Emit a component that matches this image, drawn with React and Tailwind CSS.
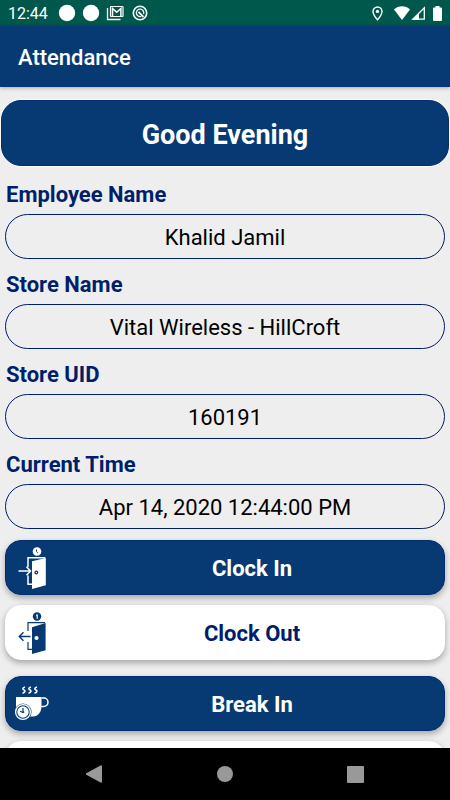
import { useState } from 'react';

const FIELDS = [
  { id: 'employee', label: 'Employee Name', value: 'Khalid Jamil' },
  { id: 'store', label: 'Store Name', value: 'Vital Wireless - HillCroft' },
  { id: 'uid', label: 'Store UID', value: '160191' },
  { id: 'time', label: 'Current Time', value: 'Apr 14, 2020 12:44:00 PM' },
];

const StatusBar = () => (
  <div className="h-[26px] shrink-0 bg-[#00574b] text-white flex items-center justify-between px-2">
    <div className="flex items-center">
      <span className="text-base leading-6 pt-0.5 w-[50px]">12:44</span>
      <svg width="42" height="18" viewBox="0 0 42 18" fill="currentColor" aria-hidden="true">
        <circle cx="9" cy="9" r="8.2" />
        <circle cx="33" cy="9" r="8.2" />
      </svg>
      <svg className="ml-1.5" width="18" height="16" viewBox="0 0 18 16" fill="none" stroke="currentColor" aria-hidden="true">
        <path d="M1.5 3v11.5h13" strokeWidth="1.3" />
        <rect x="4.5" y="1.5" width="12.5" height="10" rx="0.5" strokeWidth="1.2" />
        <path d="M6.5 11V3.500l4.200 3.800 4.200-3.800V11" strokeWidth="1.5" />
      </svg>
      <svg className="ml-2" width="16" height="16" viewBox="0 0 16 16" fill="none" stroke="currentColor" aria-hidden="true">
        <circle cx="8" cy="8" r="6.7" strokeWidth="1.6" />
        <path d="M9.300 11.300A3.700 3.700 0 1 1 11.600 8.800" strokeWidth="1.3" />
        <path d="M6.500 7 11.500 11.800" strokeWidth="1.8" />
      </svg>
    </div>
    <div className="flex items-center">
      <svg width="11" height="15" viewBox="0 0 11 15" aria-hidden="true">
        <path d="M5.500 1A4.500 4.500 0 0 0 1 5.500C1 8.700 5.500 13.800 5.500 13.800S10 8.700 10 5.500A4.500 4.500 0 0 0 5.500 1z" fill="none" stroke="currentColor" strokeWidth="1.4" />
        <circle cx="5.5" cy="5.4" r="1.7" fill="currentColor" />
      </svg>
      <svg className="ml-[11px]" width="16" height="14" viewBox="0 0 16 14" fill="currentColor" aria-hidden="true">
        <path d="M8 14 0 3.600C2.200 1.400 5 .3 8 .3s5.800 1.100 8 3.300z" />
      </svg>
      <svg className="ml-px" width="15" height="14" viewBox="0 0 15 14" aria-hidden="true">
        <path d="M1.800 13.200 13.300 1.700v11.500z" fill="none" stroke="currentColor" strokeWidth="1.3" />
        <path d="M1 13.900 8 6.800v7.100z" fill="currentColor" />
      </svg>
      <svg className="ml-[7px]" width="9" height="15" viewBox="0 0 9 15" fill="currentColor" aria-hidden="true">
        <path d="M2.500 0h4v1.500H8a1 1 0 0 1 1 1V14a1 1 0 0 1-1 1H1a1 1 0 0 1-1-1V2.500a1 1 0 0 1 1-1h1.500z" />
      </svg>
    </div>
  </div>
);

const ClockInIcon = () => (
  <svg width="32" height="42" viewBox="0 0 32 42" fill="none" aria-hidden="true">
    <circle cx="21" cy="4.5" r="4.3" fill="#fff" />
    <path d="M20.500 2.600v2l1.200 1.200" stroke="#073a73" />
    <path d="M12 20v-9.300h17.300M12 28.500V37.300h4" stroke="#fff" strokeWidth="1.5" />
    <path d="M16 14.200 29.800 11v27.200L16 42z" fill="#fff" />
    <circle cx="20.3" cy="25.5" r="1.3" stroke="#073a73" strokeWidth="1.3" />
    <path d="M2.500 24h12M10.500 19.800l4 4.200-4 4.200" stroke="#fff" strokeWidth="1.5" />
  </svg>
);

const ClockOutIcon = () => (
  <svg width="32" height="42" viewBox="0 0 32 42" fill="none" aria-hidden="true">
    <circle cx="21" cy="4.5" r="4.2" fill="#073a73" />
    <path d="M20 3.200h1.200v3.500" stroke="#fff" strokeWidth="1.2" />
    <path d="M12 19v-8.300h17M12 30v7.300h4" stroke="#073a73" strokeWidth="1.2" />
    <path d="M16 15.200 29.600 11v27.200L16 42z" fill="#073a73" />
    <circle cx="20.5" cy="26" r="2.1" fill="#fff" />
    <path d="M14.500 24.500h-11M7.500 20.300l-4.200 4.200 4.200 4.200" stroke="#073a73" strokeWidth="1.4" />
  </svg>
);

const BreakIcon = () => (
  <svg className="overflow-visible" width="36" height="36" viewBox="2 0 36 36" fill="none" stroke="#fff" aria-hidden="true">
    <path
      d="M11 1c-3 1-2.500 2.200-1 3s1.500 2.200-1.500 3.200M17 1c-3 1-2.500 2.200-1 3s1.500 2.200-1.500 3.200M23 1c-3 1-2.500 2.200-1 3s1.500 2.200-1.500 3.200"
      strokeWidth="1.5"
    />
    <path d="M2 11h25.500v9c0 6-3.500 10.500-8.500 10.500h-8.500C5 30.500 2 26 2 20z" fill="#fff" stroke="none" />
    <path d="M27.500 12h2.300a4.200 4.200 0 0 1 0 8.400h-3.500" strokeWidth="1.5" />
    <circle cx="9" cy="26" r="8.6" fill="#073a73" stroke="none" />
    <circle cx="9" cy="26" r="7.4" strokeWidth="1.3" />
    <circle cx="9" cy="26" r="5.7" fill="#fff" stroke="none" />
    <path d="M9 22v4.500M6.200 25.200l2.800 1.300 1.200-.8" stroke="#073a73" strokeWidth="1.2" />
  </svg>
);

const ActionButton = ({ icon, label, light, ...props }) => (
  <button
    type="button"
    className={`h-[55px] w-full shrink-0 rounded-[16px] border pl-2.5 pr-1 flex items-center shadow-[0_3px_6px_rgba(0,0,0,0.3)] ${
      light ? 'border-white bg-white text-[#001c6b]' : 'border-[#042c70] bg-[#073a73] text-white'
    }`}
    {...props}
  >
    <span className="w-9 shrink-0">{icon}</span>
    <span className="flex-1 pl-3 pt-0.5 text-[22px] leading-7 font-bold text-center">{label}</span>
  </button>
);

const App = () => {
  const [, setLastAction] = useState(null);

  return (
    <div className="h-screen flex flex-col overflow-hidden bg-[#eeeeee] font-['Roboto',sans-serif]">
      <StatusBar />

      <header className="h-[61px] shrink-0 bg-[#073a73] flex items-center px-[18px] pt-0.5 shadow-[0_1px_4px_rgba(0,0,0,0.3)]">
        <h1 className="text-white text-[22px] leading-7 font-medium">Attendance</h1>
      </header>

      <main className="flex-1 min-h-0 overflow-y-auto [scrollbar-width:none] pt-[13px]">
        <div className="mx-px h-[66px] rounded-[20px] border border-[#042c70] bg-[#073a73] ring-1 ring-white/70 flex items-center justify-center pt-1">
          <h2 className="text-white text-[27px] leading-9 font-bold">Good Evening</h2>
        </div>

        <form className="px-[5px] pt-[15px] flex flex-col gap-3">
          {FIELDS.map((field) => (
            <div key={field.id} className="flex flex-col gap-[5px]">
              <label htmlFor={field.id} className="pl-px text-[22px] leading-7 font-bold text-[#001f6b]">
                {field.label}
              </label>
              <input
                id={field.id}
                value={field.value}
                readOnly
                className="h-[45px] w-full rounded-full border border-[#001c6b] bg-transparent pt-0.5 text-[22px] text-center text-black outline-none"
              />
            </div>
          ))}
        </form>

        <div className="px-[5px] pt-[11px] pb-4 flex flex-col gap-4">
          <div className="flex flex-col gap-2.5">
            <ActionButton icon={<ClockInIcon />} label="Clock In" onClick={() => setLastAction('clock-in')} />
            <ActionButton icon={<ClockOutIcon />} label="Clock Out" light onClick={() => setLastAction('clock-out')} />
          </div>
          <div className="flex flex-col gap-2.5">
            <ActionButton icon={<BreakIcon />} label="Break In" onClick={() => setLastAction('break-in')} />
            <ActionButton aria-label="Break Out" light onClick={() => setLastAction('break-out')} />
          </div>
        </div>
      </main>

      <nav className="h-[52px] shrink-0 bg-black text-[#999999] flex items-center justify-around px-[29px]">
        <button type="button" aria-label="Back">
          <svg width="18" height="18" viewBox="0 0 18 18" fill="currentColor">
            <path d="M15 .3a.8.8 0 0 1 1 .8v15.800a.8.8 0 0 1-1 .8L.3 9.700a.8.8 0 0 1 0-1.400z" />
          </svg>
        </button>
        <button type="button" aria-label="Home">
          <svg width="16" height="16" viewBox="0 0 16 16" fill="currentColor">
            <circle cx="8" cy="8" r="8" />
          </svg>
        </button>
        <button type="button" aria-label="Recent apps">
          <svg width="17" height="17" viewBox="0 0 17 17" fill="currentColor">
            <rect width="17" height="17" rx="1" />
          </svg>
        </button>
      </nav>
    </div>
  );
};

export default App;
